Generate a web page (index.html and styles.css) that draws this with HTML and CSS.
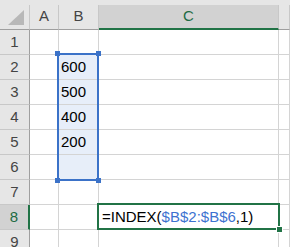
FILE: index.html
```html
<!DOCTYPE html>
<html lang="ja">
<head>
    <meta charset="UTF-8">
    <title>INDEX</title>
    <link rel="stylesheet" href="styles.css">
</head>
<body>

<div class="top-strip"></div>

<div class="sheet">
    <!-- en-têtes de colonnes -->
    <div class="hd corner"><span class="tri"></span></div>
    <div class="hd col">A</div>
    <div class="hd col">B</div>
    <div class="hd col sel-col">C</div>
    <div class="hd col"></div>

    <div class="hd row">1</div><div class="c"></div><div class="c"></div><div class="c"></div><div class="c"></div>
    <div class="hd row">2</div><div class="c"></div><div class="c blue">600</div><div class="c"></div><div class="c"></div>
    <div class="hd row">3</div><div class="c"></div><div class="c blue">500</div><div class="c"></div><div class="c"></div>
    <div class="hd row">4</div><div class="c"></div><div class="c blue">400</div><div class="c"></div><div class="c"></div>
    <div class="hd row">5</div><div class="c"></div><div class="c blue">200</div><div class="c"></div><div class="c"></div>
    <div class="hd row">6</div><div class="c"></div><div class="c blue"></div><div class="c"></div><div class="c"></div>
    <div class="hd row">7</div><div class="c"></div><div class="c"></div><div class="c"></div><div class="c"></div>
    <div class="hd row sel-row">8</div><div class="c"></div><div class="c"></div>
    <div class="c formula">=INDEX(<span class="ref">$B$2:$B$6</span>,1)</div><div class="c"></div>
    <div class="hd row">9</div><div class="c"></div><div class="c"></div><div class="c"></div><div class="c"></div>

    <!-- plage référencée -->
    <div class="range">
        <span class="handle tl"></span>
        <span class="handle tr"></span>
        <span class="handle bl"></span>
        <span class="handle br"></span>
    </div>

    <!-- cellule active -->
    <div class="active">
        <span class="fill-handle"></span>
    </div>
</div>

</body>
</html>
```

FILE: styles.css
```css
* {
    box-sizing: border-box;
}

body {
    margin: 0;
    font-family: 'Liberation Sans', Arial, sans-serif;
    font-size: 15px;
    background: #fff;
    color: #000;
    overflow: hidden;
}

.top-strip {
    height: 5px;
    background: #e6e6e6;
}

.sheet {
    position: relative;
    display: grid;
    grid-template-columns: 30px 29px 40px 180px 1fr;
    grid-auto-rows: 25px;
}

.c {
    border-right: 1px solid #d4d4d4;
    border-bottom: 1px solid #d4d4d4;
    line-height: 24px;
    padding-left: 2px;
    white-space: nowrap;
}

.blue {
    background: #e7eef9;
}

.formula {
    padding-left: 3px;
}

.ref {
    color: #3d72d0;
}

/* En-têtes */
.hd {
    background: #e6e6e6;
    color: #444;
    text-align: center;
}

.col {
    border-right: 1px solid #c8c8c8;
    border-bottom: 1px solid #9f9f9f;
    line-height: 22px;
}

.row {
    border-right: 1px solid #9f9f9f;
    border-bottom: 1px solid #c8c8c8;
    line-height: 24px;
}

.corner {
    position: relative;
    border-right: 1px solid #c8c8c8;
    border-bottom: 1px solid #9f9f9f;
}

.tri {
    position: absolute;
    left: 8px;
    top: 5px;
    width: 0;
    height: 0;
    border-left: 16px solid transparent;
    border-bottom: 15px solid #b8b8b8;
}

.sel-col {
    background: #d2d2d2;
    color: #1e6b43;
    border-bottom: 2px solid #217346;
}

.sel-row {
    background: #d2d2d2;
    color: #1e6b43;
    border-right: 2px solid #217346;
}

/* Plage B2:B6 */
.range {
    position: absolute;
    left: 57px;
    top: 48px;
    width: 42px;
    height: 128px;
    border: 2px solid #3b72c8;
}

.handle {
    position: absolute;
    width: 5px;
    height: 5px;
    background: #3b72c8;
}

.tl { left: -4px; top: -4px; }
.tr { right: -4px; top: -4px; }
.bl { left: -4px; bottom: -4px; }
.br { right: -4px; bottom: -4px; }

/* Cellule active C8 */
.active {
    position: absolute;
    left: 97px;
    top: 198px;
    width: 183px;
    height: 27px;
    border: 2px solid #217346;
}

.fill-handle {
    position: absolute;
    right: -5px;
    bottom: -5px;
    width: 7px;
    height: 7px;
    background: #217346;
    border: 1px solid #fff;
}
```
